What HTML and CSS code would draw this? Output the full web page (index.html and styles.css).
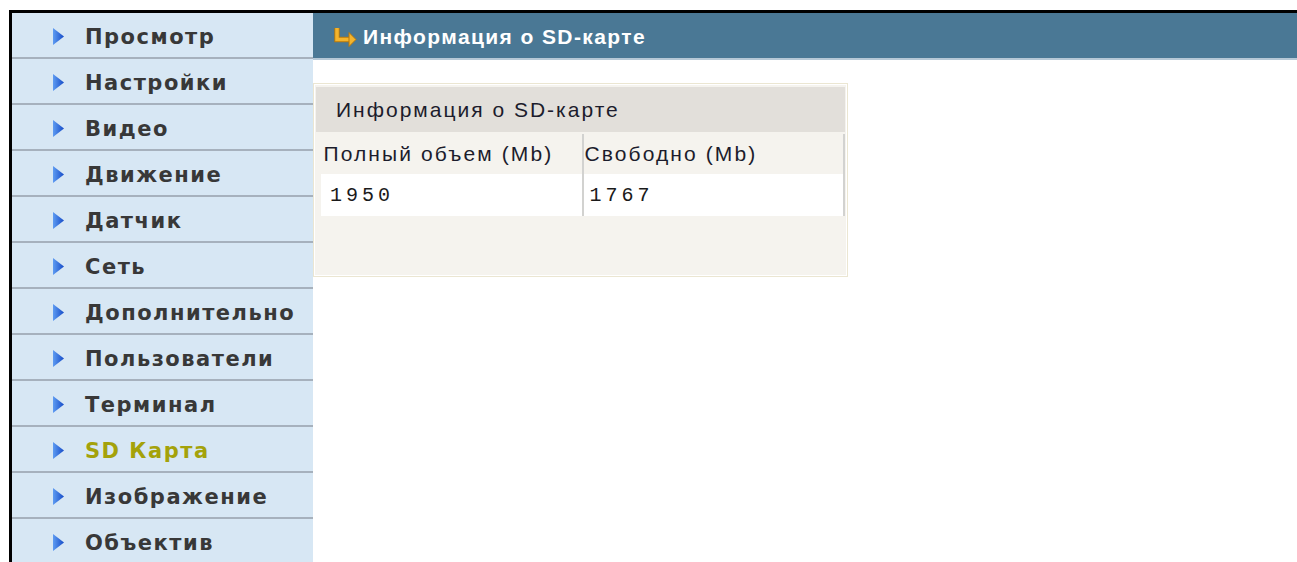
FILE: index.html
```html
<!DOCTYPE html>
<html lang="ru">
<head>
<meta charset="utf-8">
<title>SD-карта</title>
<link rel="stylesheet" href="styles.css">
</head>
<body>
<div class="frame">
  <nav class="menu">
    <a class="menu-item" href="#"><span class="tri"></span>Просмотр</a>
    <a class="menu-item" href="#"><span class="tri"></span>Настройки</a>
    <a class="menu-item" href="#"><span class="tri"></span>Видео</a>
    <a class="menu-item" href="#"><span class="tri"></span>Движение</a>
    <a class="menu-item" href="#"><span class="tri"></span>Датчик</a>
    <a class="menu-item" href="#"><span class="tri"></span>Сеть</a>
    <a class="menu-item" href="#"><span class="tri"></span>Дополнительно</a>
    <a class="menu-item" href="#"><span class="tri"></span>Пользователи</a>
    <a class="menu-item" href="#"><span class="tri"></span>Терминал</a>
    <a class="menu-item active" href="#"><span class="tri"></span>SD Карта</a>
    <a class="menu-item" href="#"><span class="tri"></span>Изображение</a>
    <a class="menu-item" href="#"><span class="tri"></span>Объектив</a>
  </nav>
  <main class="main">
    <div class="page-title">
      <svg class="title-icon" width="24" height="20" viewBox="0 0 24 20">
        <path d="M3 1 V12.5 H16" fill="none" stroke="#b7780c" stroke-width="5.5"/>
        <path d="M3 1 V12.5 H16" fill="none" stroke="#f4b42c" stroke-width="3.5"/>
        <path d="M15 5.5 L22 12.5 L15 19.5 Z" fill="#f4b42c" stroke="#b7780c" stroke-width="1"/>
      </svg>
      <span>Информация о SD-карте</span>
    </div>
    <section class="panel">
      <div class="panel-head">Информация о SD-карте</div>
      <table class="info">
        <tr class="cols">
          <th>Полный объем (Mb)</th>
          <th>Свободно (Mb)</th>
        </tr>
        <tr class="vals">
          <td>1950</td>
          <td>1767</td>
        </tr>
      </table>
    </section>
  </main>
</div>
</body>
</html>
```

FILE: styles.css
```css
html, body {
  margin: 0;
  padding: 0;
  background: #fff;
}

.frame {
  margin: 10px 0 0 9px;
  border-top: 3px solid #000;
  border-left: 3px solid #000;
  display: flex;
  height: 549px;
  overflow: hidden;
}

/* left navigation */
.menu {
  width: 301px;
  flex: none;
  background: #d7e7f4;
  display: flex;
  flex-direction: column;
}

.menu-item {
  box-sizing: border-box;
  height: 46px;
  padding-top: 3px;
  flex: none;
  display: flex;
  align-items: center;
  border-bottom: 2px solid #a6b1bd;
  text-decoration: none;
  color: #383838;
  font-family: "DejaVu Sans", sans-serif;
  font-weight: bold;
  font-size: 21px;
  letter-spacing: 1.5px;
}

.menu-item.active {
  color: #a4a20a;
}

.tri {
  width: 11px;
  height: 17px;
  margin: 0 21px 0 41px;
  background: linear-gradient(90deg, #5e9cf2, #164cc8);
  clip-path: polygon(0 0, 100% 50%, 0 100%);
}

/* content */
.main {
  flex: 1;
  display: flex;
  flex-direction: column;
  align-items: flex-start;
}

.page-title {
  align-self: stretch;
  box-sizing: border-box;
  height: 47px;
  background: #4a7895;
  border-bottom: 2px solid #b6c8d6;
  display: flex;
  align-items: center;
  color: #fff;
  font-family: "Liberation Sans", Arial, sans-serif;
  font-weight: bold;
  font-size: 21px;
  letter-spacing: 1.4px;
  padding-left: 21px;
  padding-top: 2px;
}

.title-icon {
  margin-right: 5px;
}

.panel {
  margin-top: 23px;
  width: 529px;
  height: 188px;
  border: 1px solid #ebe6d2;
  padding: 2px;
  background: #f5f3ee;
  box-shadow: inset 0 0 0 1px #fff;
}

.panel-head {
  height: 45px;
  margin-top: 1px;
  background: #e2dfda;
  display: flex;
  align-items: center;
  padding-left: 20px;
  color: #1c1c2c;
  font-family: "Liberation Sans", Arial, sans-serif;
  font-size: 21px;
  letter-spacing: 2px;
}

.info {
  width: 100%;
  border-collapse: collapse;
  margin-top: 2px;
}

.info th {
  height: 40px;
  text-align: left;
  font-weight: normal;
  padding: 0 0 0 5px;
  color: #1c1c2c;
  font-family: "Liberation Sans", Arial, sans-serif;
  font-size: 21px;
  letter-spacing: 2.1px;
  border-right: 2px solid #d2d2d0;
}

.info th:first-child {
  width: 258px;
}

.info th + th {
  padding-left: 1px;
}

.info td {
  height: 42px;
  background: #fff;
  padding: 0 0 0 6px;
  font-family: "Liberation Mono", monospace;
  font-size: 20px;
  letter-spacing: 4px;
  color: #1a1a1a;
  border-right: 2px solid #d2d2d0;
}

.info td:first-child {
  border-left: 5px solid #f5f3ee;
  padding-left: 9px;
}
```
